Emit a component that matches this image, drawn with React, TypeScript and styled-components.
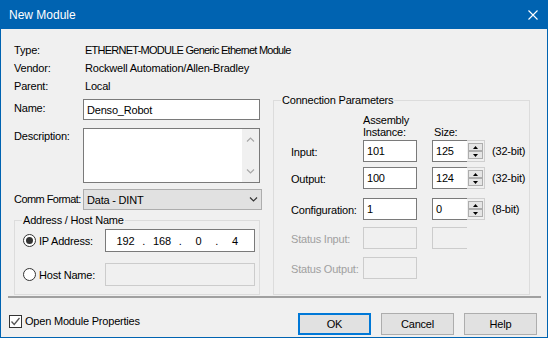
import React from "react";
import styled, { createGlobalStyle } from "styled-components";

const Global = createGlobalStyle`
  html, body { margin: 0; padding: 0; background: #f0f0f0; }
  body { font-family: "Liberation Sans", Arial, sans-serif; font-size: 11px; color: #000; }
  * { box-sizing: border-box; }
`;

const Window = styled.div`
  width: 548px;
  height: 338px;
  border: 1px solid #0063b1;
  border-top: none;
  display: flex;
  flex-direction: column;
  background: #f0f0f0;
  letter-spacing: -0.2px;
`;

const TitleBar = styled.div`
  height: 29px;
  margin: 0 -1px;
  padding-left: 9px;
  background: #0063b1;
  color: #fff;
  font-size: 12px;
  letter-spacing: 0;
  display: flex;
  align-items: center;
  justify-content: space-between;
  flex: none;
`;

const CloseIcon = styled.svg`
  width: 10px;
  height: 10px;
  margin-right: 10px;
  margin-top: 1px;
`;

const Body = styled.div`
  padding: 12px 0 0 13px;
  flex: none;
`;

const InfoGrid = styled.div`
  display: grid;
  grid-template-columns: 71px auto;
  grid-template-rows: 18px 18px 17px;
  align-items: center;
`;

const InfoValue = styled.span<{ $tight?: boolean }>`
  letter-spacing: ${(p) => (p.$tight ? "-0.75px" : "inherit")};
  white-space: nowrap;
`;

const Main = styled.div`
  display: flex;
  gap: 11px;
  align-items: stretch;
`;

const LeftCol = styled.div`
  width: 248px;
  display: flex;
  flex-direction: column;
`;

const FieldRow = styled.div<{ $mt: number; $align?: string }>`
  display: flex;
  margin-top: ${(p) => p.$mt}px;
  align-items: ${(p) => p.$align || "center"};
`;

const Label = styled.div<{ $pt?: number; $tight?: boolean }>`
  width: 69px;
  flex: none;
  line-height: 13px;
  padding-top: ${(p) => p.$pt || 0}px;
  letter-spacing: ${(p) => (p.$tight ? "-0.55px" : "inherit")};
  white-space: nowrap;
`;

const TextBox = styled.div`
  width: 177px;
  height: 21px;
  border: 1px solid #7a7a7a;
  background: #fff;
  padding: 0 3px;
  display: flex;
  align-items: center;
`;

const TextArea = styled.div`
  width: 177px;
  height: 55px;
  border: 1px solid #7a7a7a;
  background: #fff;
  display: flex;
  justify-content: flex-end;
`;

const ScrollBar = styled.div`
  width: 17px;
  background: #f0f0f0;
  display: flex;
  flex-direction: column;
  justify-content: space-between;
  align-items: center;
  padding: 8px 0 8px;
`;

const Select = styled.div`
  width: 179px;
  height: 21px;
  border: 1px solid #adadad;
  background: #e1e1e1;
  padding: 0 3px 0 3px;
  display: flex;
  align-items: center;
  justify-content: space-between;
`;

const Group = styled.fieldset<{ $pl: number; $pb: number; $w: number }>`
  margin: 0;
  min-width: 0;
  width: ${(p) => p.$w}px;
  border: 1px solid #dcdcdc;
  padding: 0 4px ${(p) => p.$pb}px ${(p) => p.$pl}px;
`;

const Legend = styled.legend<{ $ml: number }>`
  padding: 0 1px;
  margin-left: ${(p) => p.$ml}px;
  line-height: 13px;
`;

const RadioRow = styled.div<{ $mt: number }>`
  display: flex;
  align-items: center;
  margin-top: ${(p) => p.$mt}px;
`;

const RadioLabel = styled.div`
  width: 82px;
  flex: none;
  display: flex;
  align-items: center;
  gap: 3px;
`;

const RadioCircle = styled.div<{ $checked?: boolean }>`
  width: 13px;
  height: 13px;
  border-radius: 50%;
  border: 1px solid #333;
  background: #fff;
  display: flex;
  align-items: center;
  justify-content: center;
  &::after {
    content: "";
    width: 7px;
    height: 7px;
    border-radius: 50%;
    background: ${(p) => (p.$checked ? "#333" : "transparent")};
  }
`;

const IpBox = styled.div<{ $disabled?: boolean }>`
  width: 150px;
  height: 23px;
  border: 1px solid ${(p) => (p.$disabled ? "#cccccc" : "#7a7a7a")};
  background: ${(p) => (p.$disabled ? "#f0f0f0" : "#fff")};
  display: flex;
  align-items: center;
  padding-left: 5px;
`;

const Octet = styled.span`
  width: 29px;
  text-align: center;
`;

const Dot = styled.span`
  width: 7.5px;
  text-align: center;
`;

const ParamGroupInner = styled.div`
  display: flex;
  flex-direction: column;
`;

const ParamRow = styled.div<{ $mt: number; $align?: string }>`
  display: grid;
  grid-template-columns: 72px 69px 60px auto;
  margin-top: ${(p) => p.$mt}px;
  align-items: ${(p) => p.$align || "center"};
`;

const HeaderText = styled.div<{ $pl?: number }>`
  line-height: 12px;
  padding-left: ${(p) => p.$pl || 0}px;
`;

const ParamLabel = styled.div<{ $disabled?: boolean }>`
  line-height: 13px;
  padding-top: 2px;
  color: ${(p) => (p.$disabled ? "#a0a0a0" : "#000")};
  white-space: nowrap;
`;

const NumBox = styled.div<{ $disabled?: boolean }>`
  width: 54px;
  height: 22px;
  border: 1px solid ${(p) => (p.$disabled ? "#cccccc" : "#7a7a7a")};
  background: ${(p) => (p.$disabled ? "#f0f0f0" : "#fff")};
  padding-left: 3px;
  display: flex;
  align-items: center;
`;

const SizeField = styled.div`
  display: flex;
  height: 22px;
`;

const SizeBox = styled.div<{ $disabled?: boolean }>`
  width: 35px;
  height: 22px;
  border: 1px solid ${(p) => (p.$disabled ? "#cccccc" : "#7a7a7a")};
  border-right: none;
  background: ${(p) => (p.$disabled ? "#f0f0f0" : "#fff")};
  padding-left: 3px;
  display: flex;
  align-items: center;
`;

const Spinner = styled.div`
  width: 18px;
  height: 22px;
  border: 1px solid #cfcfcf;
  border-left: none;
  padding: 2px 1px 2px 1px;
  display: flex;
  flex-direction: column;
`;

const SpinButton = styled.div`
  flex: 1;
  border: 1px solid #adadad;
  background: #e5e5e5;
  display: flex;
  align-items: center;
  justify-content: center;
`;

const Unit = styled.div`
  line-height: 13px;
  white-space: nowrap;
`;

const Separator = styled.div`
  height: 2px;
  background: #a0a0a0;
  margin: 1px 6px 0 7px;
  flex: none;
`;

const Footer = styled.div`
  flex: 1;
  display: flex;
  align-items: flex-start;
  padding: 15px 10px 0 8px;
`;

const CheckRow = styled.div`
  display: flex;
  align-items: center;
  gap: 3px;
  margin-top: 2px;
  line-height: 13px;
`;

const CheckBox = styled.div`
  width: 13px;
  height: 13px;
  border: 1px solid #333;
  background: #fff;
  display: flex;
  align-items: center;
  justify-content: center;
`;

const Buttons = styled.div`
  margin-left: auto;
  display: flex;
  gap: 10px;
`;

const Button = styled.div<{ $default?: boolean }>`
  width: 73px;
  height: 22px;
  border: ${(p) => (p.$default ? "2px solid #0078d7" : "1px solid #adadad")};
  background: #e1e1e1;
  display: flex;
  align-items: center;
  justify-content: center;
`;

const ChevronUp = () => (
  <svg width="9" height="5" viewBox="0 0 9 5">
    <polyline points="1,4.5 4.5,1 8,4.5" fill="none" stroke="#a8a8a8" strokeWidth="1.2" />
  </svg>
);
const ChevronDown = ({ color = "#a8a8a8" }: { color?: string }) => (
  <svg width="9" height="5" viewBox="0 0 9 5">
    <polyline points="1,0.5 4.5,4 8,0.5" fill="none" stroke={color} strokeWidth="1.2" />
  </svg>
);
const TriUp = () => (
  <svg width="5" height="3" viewBox="0 0 5 3">
    <polygon points="0,3 2.5,0 5,3" fill="#000" />
  </svg>
);
const TriDown = () => (
  <svg width="5" height="3" viewBox="0 0 5 3">
    <polygon points="0,0 2.5,3 5,0" fill="#000" />
  </svg>
);

const SpinnerBox = () => (
  <Spinner>
    <SpinButton>
      <TriUp />
    </SpinButton>
    <SpinButton>
      <TriDown />
    </SpinButton>
  </Spinner>
);

export default function App() {
  return (
    <>
      <Global />
      <Window>
        <TitleBar>
          <span>New Module</span>
          <CloseIcon viewBox="0 0 10 10">
            <path d="M0.5 0.5 L9.5 9.5 M9.5 0.5 L0.5 9.5" stroke="#fff" strokeWidth="1.1" />
          </CloseIcon>
        </TitleBar>
        <Body>
          <InfoGrid>
            <span>Type:</span>
            <InfoValue $tight>ETHERNET-MODULE Generic Ethernet Module</InfoValue>
            <span>Vendor:</span>
            <InfoValue>Rockwell Automation/Allen-Bradley</InfoValue>
            <span>Parent:</span>
            <InfoValue>Local</InfoValue>
          </InfoGrid>
          <Main>
            <LeftCol>
              <FieldRow $mt={5} $align="flex-start">
                <Label $pt={3}>Name:</Label>
                <TextBox>Denso_Robot</TextBox>
              </FieldRow>
              <FieldRow $mt={8} $align="flex-start">
                <Label $pt={2}>Description:</Label>
                <TextArea>
                  <ScrollBar>
                    <ChevronUp />
                    <ChevronDown />
                  </ScrollBar>
                </TextArea>
              </FieldRow>
              <FieldRow $mt={6}>
                <Label $tight>Comm Format:</Label>
                <Select>
                  <span>Data - DINT</span>
                  <ChevronDown color="#333" />
                </Select>
              </FieldRow>
              <FieldRow $mt={4}>
                <Group $pl={8} $pb={8} $w={246}>
                  <Legend $ml={-1}>Address / Host Name</Legend>
                  <RadioRow $mt={2}>
                    <RadioLabel>
                      <RadioCircle $checked />
                      <span>IP Address:</span>
                    </RadioLabel>
                    <IpBox>
                      <Octet>192</Octet>
                      <Dot>.</Dot>
                      <Octet>168</Octet>
                      <Dot>.</Dot>
                      <Octet>0</Octet>
                      <Dot>.</Dot>
                      <Octet>4</Octet>
                    </IpBox>
                  </RadioRow>
                  <RadioRow $mt={11}>
                    <RadioLabel>
                      <RadioCircle />
                      <span>Host Name:</span>
                    </RadioLabel>
                    <IpBox $disabled />
                  </RadioRow>
                </Group>
              </FieldRow>
            </LeftCol>
            <Group $pl={17} $pb={14} $w={257}>
              <Legend $ml={-10}>Connection Parameters</Legend>
              <ParamGroupInner>
                <ParamRow $mt={7} $align="end">
                  <span />
                  <HeaderText>
                    Assembly
                    <br />
                    Instance:
                  </HeaderText>
                  <HeaderText $pl={2}>Size:</HeaderText>
                  <span />
                </ParamRow>
                <ParamRow $mt={2}>
                  <ParamLabel>Input:</ParamLabel>
                  <NumBox>101</NumBox>
                  <SizeField>
                    <SizeBox>125</SizeBox>
                    <SpinnerBox />
                  </SizeField>
                  <Unit>(32-bit)</Unit>
                </ParamRow>
                <ParamRow $mt={5}>
                  <ParamLabel>Output:</ParamLabel>
                  <NumBox>100</NumBox>
                  <SizeField>
                    <SizeBox>124</SizeBox>
                    <SpinnerBox />
                  </SizeField>
                  <Unit>(32-bit)</Unit>
                </ParamRow>
                <ParamRow $mt={9}>
                  <ParamLabel>Configuration:</ParamLabel>
                  <NumBox>1</NumBox>
                  <SizeField>
                    <SizeBox>0</SizeBox>
                    <SpinnerBox />
                  </SizeField>
                  <Unit>(8-bit)</Unit>
                </ParamRow>
                <ParamRow $mt={7}>
                  <ParamLabel $disabled>Status Input:</ParamLabel>
                  <NumBox $disabled />
                  <SizeField>
                    <SizeBox $disabled />
                  </SizeField>
                  <span />
                </ParamRow>
                <ParamRow $mt={8}>
                  <ParamLabel $disabled>Status Output:</ParamLabel>
                  <NumBox $disabled />
                  <span />
                  <span />
                </ParamRow>
              </ParamGroupInner>
            </Group>
          </Main>
        </Body>
        <Separator />
        <Footer>
          <CheckRow>
            <CheckBox>
              <svg width="11" height="11" viewBox="0 0 11 11">
                <polyline points="1.5,5.5 4.2,8.5 9.5,2" fill="none" stroke="#555" strokeWidth="1.3" />
              </svg>
            </CheckBox>
            <span>Open Module Properties</span>
          </CheckRow>
          <Buttons>
            <Button $default>OK</Button>
            <Button>Cancel</Button>
            <Button>Help</Button>
          </Buttons>
        </Footer>
      </Window>
    </>
  );
}
